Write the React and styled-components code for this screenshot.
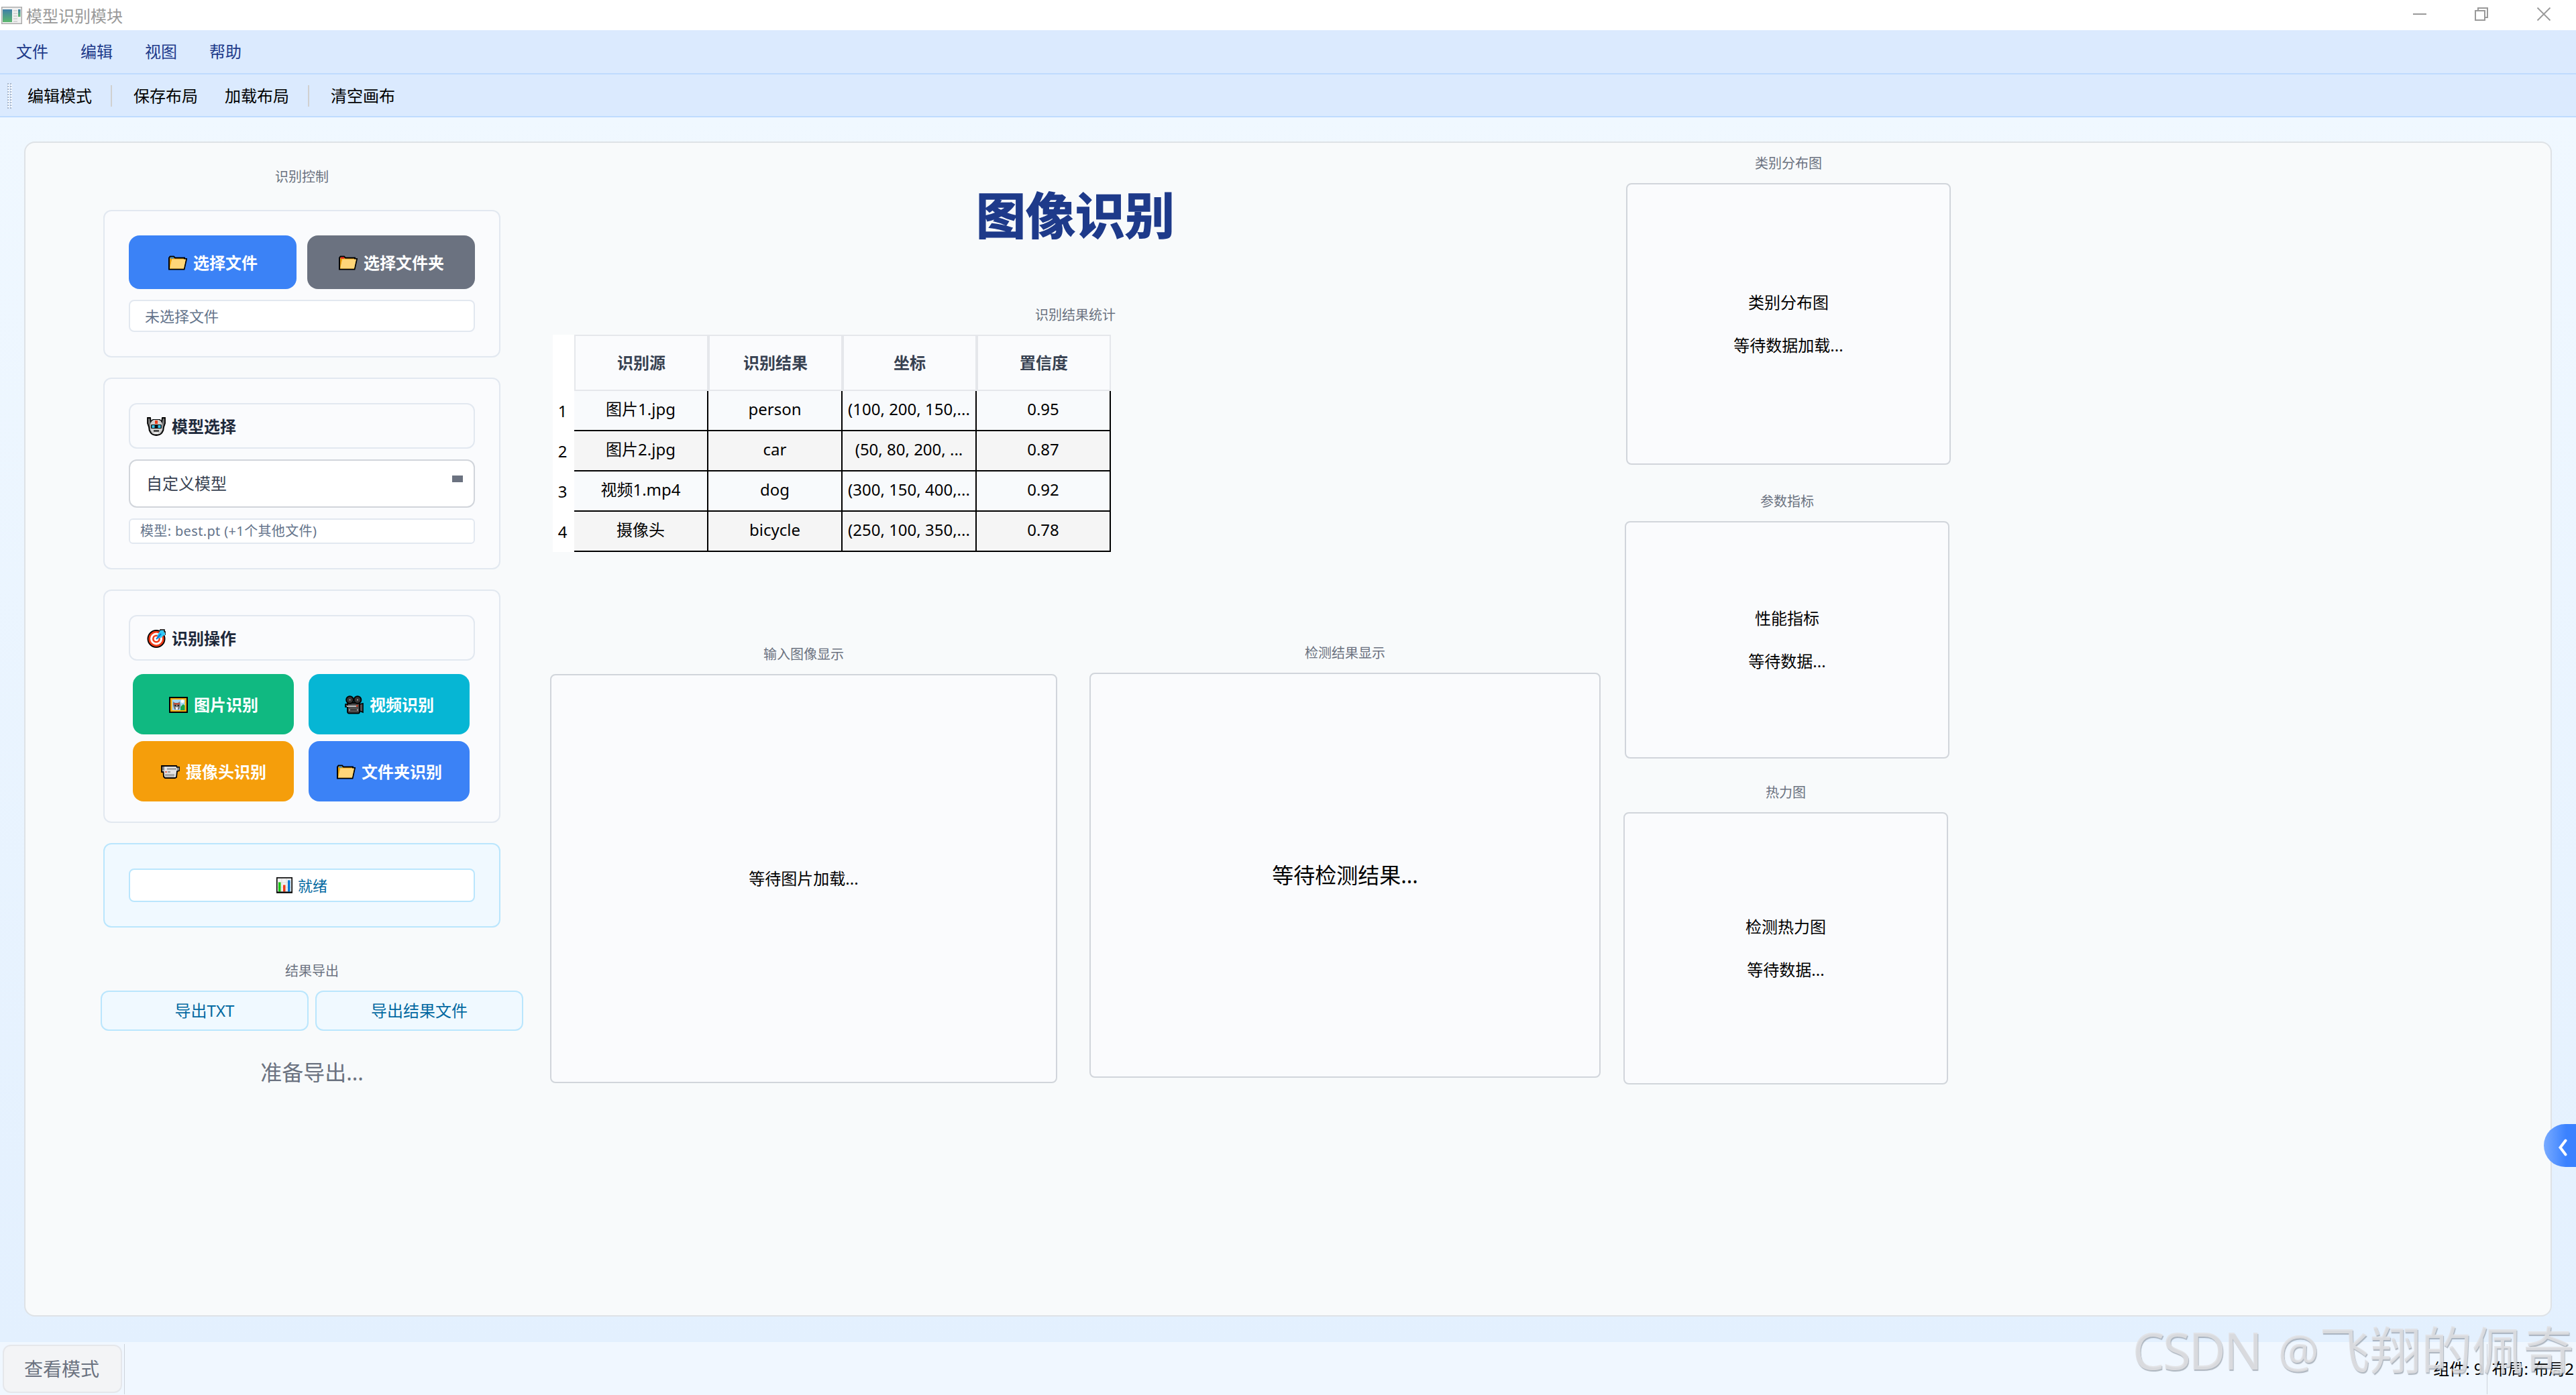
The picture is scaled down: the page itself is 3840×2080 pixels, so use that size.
import React from 'react';
import styled, { createGlobalStyle } from 'styled-components';

const GlobalStyle = createGlobalStyle`
  * {
    box-sizing: border-box;
  }
  body {
    margin: 0;
    font-family: "Noto Sans", "Noto Sans CJK SC", sans-serif;
    font-size: 24px;
    line-height: 30px;
    color: #000;
  }
`;

const Window = styled.div`
  position: relative;
  width: 3840px;
  height: 2080px;
  display: flex;
  flex-direction: column;
  overflow: hidden;
  background: #f0f7ff;
`;

const TitleBar = styled.div`
  height: 45px;
  display: flex;
  align-items: center;
  padding: 0 37px 0 2px;
  background: #fff;
  color: #999;
`;

const TitleText = styled.span`
  flex: 1;
  padding: 2px 0 0 6px;
`;

const WindowButtons = styled.div`
  display: flex;
  gap: 70px;
  padding-bottom: 3px;
`;

const MenuBar = styled.div`
  height: 66px;
  display: flex;
  align-items: center;
  gap: 48px;
  padding-left: 24px;
  background: #dbeafe;
  border-bottom: 2px solid #bfdbfe;
  color: #1e3a8a;
`;

const ToolBar = styled.div`
  height: 64px;
  display: flex;
  align-items: center;
  padding: 2px 0 0 11px;
  background: #dbeafe;
  border-bottom: 2px solid #bfdbfe;
`;

const Grip = styled.div`
  width: 7px;
  height: 38px;
  margin-right: 23px;
  background-image: radial-gradient(circle at 1px 1px, #a9b6c9 1px, transparent 1.3px),
    radial-gradient(circle at 2px 3px, #fff 1px, transparent 1.3px);
  background-size: 4px 4px;
`;

const ToolDivider = styled.div`
  width: 2px;
  height: 32px;
  margin: 0 32px 0 28px;
  background: #d0d0d0;
`;

const ToolItem = styled.span`
  & + & {
    margin-left: 40px;
  }
`;

const Workspace = styled.div`
  height: 1826px;
  padding: 36px 36px 38px;
  background: linear-gradient(#f0f8ff, #e3f0fe);
`;

const Canvas = styled.div`
  height: 100%;
  display: flex;
  align-items: flex-start;
  padding-left: 112px;
  background: #f8fafb;
  border: 2px solid #dee2e6;
  border-radius: 16px;
`;

const LeftColumn = styled.div`
  width: 630px;
  padding-top: 36px;
  margin-right: 40px;
`;

const MiddleColumn = styled.div`
  width: 1566px;
  padding-top: 68px;
  margin-right: 34px;
`;

const RightColumn = styled.div`
  padding-top: 16px;
`;

const Label = styled.div`
  height: 30px;
  margin-bottom: 14px;
  font-size: 20px;
  text-align: center;
  color: #6b7280;
`;

const Controls = styled.div`
  width: 592px;
  margin-left: 4px;
  display: flex;
  flex-direction: column;
  gap: 30px;

  ${Label} {
    margin-bottom: 4px;
  }
`;

const Card = styled.div`
  display: flex;
  flex-direction: column;
  gap: 16px;
  padding: 36px 36px ${p => p.$bottom || 36}px;
  background: ${p => (p.$info ? '#f0f9ff' : '#fafbfd')};
  border: 2px solid ${p => (p.$info ? '#bae6fd' : '#e2e8f0')};
  border-radius: 12px;
`;

const Pair = styled.div`
  display: grid;
  grid-template-columns: 1fr 1fr;
  gap: 16px;
`;

const ActionGrid = styled.div`
  display: grid;
  grid-template-columns: 240px 240px;
  gap: 10px 22px;
  padding: 4px 0 0 6px;
`;

const Button = styled.button`
  height: ${p => p.$height}px;
  display: flex;
  align-items: center;
  justify-content: center;
  gap: 9px;
  padding: 1px 0 0 1px;
  border: none;
  border-radius: 16px;
  background: ${p => p.$color};
  color: #fff;
  font: inherit;
  font-weight: 700;
`;

const FileBox = styled.div`
  height: 48px;
  display: flex;
  align-items: center;
  padding: 0 22px;
  background: #fff;
  border: 2px solid #e2e8f0;
  border-radius: 8px;
  font-size: 22px;
  color: #64748b;
`;

const SectionTitle = styled.div`
  height: 68px;
  display: flex;
  align-items: center;
  gap: 9px;
  padding: 1px 25px 0;
  border: 2px solid #e2e8f0;
  border-radius: 12px;
  font-weight: 700;
  color: #1e293b;
`;

const Select = styled.div`
  height: 72px;
  display: flex;
  justify-content: space-between;
  padding: 19px 16px 0 24px;
  background: #fff;
  border: 2px solid #d1d5db;
  border-radius: 12px;
  color: #374151;
`;

const SelectMark = styled.span`
  width: 16px;
  height: 10px;
  margin-top: 3px;
  background: #6b7280;
`;

const ModelInfo = styled.div`
  height: 38px;
  padding: 2px 15px 0;
  background: #fff;
  border: 2px solid #e2e8f0;
  border-radius: 6px;
  font-size: 20px;
  letter-spacing: 0.35px;
  color: #64748b;
`;

const Ready = styled.div`
  height: 50px;
  display: flex;
  align-items: center;
  justify-content: center;
  gap: 8px;
  background: #fff;
  border: 2px solid #bae6fd;
  border-radius: 8px;
  font-size: 22px;
  color: #0369a1;
`;

const Export = styled.div`
  margin-top: 50px;
`;

const ExportRow = styled.div`
  display: grid;
  grid-template-columns: 310px 310px;
  gap: 10px;
`;

const ExportButton = styled.button`
  height: 60px;
  padding: 0;
  background: #f0f9ff;
  border: 2px solid #bae6fd;
  border-radius: 12px;
  font: inherit;
  color: #0369a1;
`;

const ExportStatus = styled.div`
  margin-top: 42px;
  font-size: 32px;
  line-height: 40px;
  text-align: center;
  color: #6b7280;
`;

const Heading = styled.h1`
  height: 80px;
  margin: 0 0 94px;
  font-size: 74px;
  line-height: 80px;
  text-align: center;
  color: #1e3a8a;
  -webkit-text-stroke: 1.5px #1e3a8a;
`;

const Table = styled.div`
  width: 832px;
  margin-left: 4px;
`;

const TableRow = styled.div`
  display: grid;
  grid-template-columns: 32px repeat(4, 200px);
`;

const IndexCell = styled.div`
  padding: 15px 3px 0 0;
  background: #fff;
  text-align: center;
`;

const HeadCell = styled.div`
  height: 84px;
  display: flex;
  align-items: center;
  justify-content: center;
  background: #fafbfd;
  border: 2px solid #e5e7eb;
  font-weight: 700;
  color: #374151;
`;

const Cell = styled.div`
  height: 60px;
  padding-top: 12px;
  background: ${p => (p.$alt ? '#f5f5f5' : '#f8fafc')};
  border-right: 2px solid #000;
  border-bottom: 2px solid #000;
  text-align: center;
  white-space: nowrap;
`;

const Displays = styled.div`
  display: flex;
  align-items: flex-start;
  gap: 48px;
  margin-top: 136px;
`;

const Widget = styled.div`
  width: ${p => p.$width}px;
  margin-top: ${p => p.$top || 0}px;
  margin-left: ${p => p.$left || 0}px;
`;

const Panel = styled.div`
  height: ${p => p.$height}px;
  display: flex;
  flex-direction: column;
  align-items: center;
  justify-content: center;
  gap: 34px;
  background: #fafbfd;
  border: 2px solid #d1d5db;
  border-radius: 8px;
  font-size: ${p => p.$size || 24}px;
`;

const StatusBar = styled.div`
  height: 79px;
  display: flex;
  align-items: center;
  padding: 1px 3px 0 4px;
`;

const ModeButton = styled.button`
  width: 178px;
  height: 72px;
  padding: 0 2px 0 0;
  background: #f3f4f6;
  border: 2px solid #e5e7eb;
  border-radius: 12px;
  font: inherit;
  font-size: 28px;
  color: #6b7280;
`;

const StatusDivider = styled.div`
  width: 1px;
  height: 75px;
  margin: ${p => p.$margin};
  background: #cdd3da;
`;

const Spacer = styled.div`
  flex: 1;
`;

const Drawer = styled.div`
  position: absolute;
  top: 1676px;
  right: 0;
  width: 48px;
  height: 64px;
  padding: 22px 0 0 21px;
  line-height: 0;
  border-radius: 32px 0 0 32px;
  background: linear-gradient(90deg, #78aaff, #3b82ff 70%);
`;

const Watermark = styled.div`
  position: absolute;
  right: 3px;
  bottom: 17px;
  display: flex;
  font-size: 76px;
  line-height: 100px;
  white-space: nowrap;
  color: rgba(224, 225, 227, 0.85);
  text-shadow: 1px 2px 1px rgba(130, 138, 148, 0.6);
`;

const Brand = styled.span`
  margin-right: 26px;
  letter-spacing: -3px;
`;

const At = styled.span`
  font-size: 68px;
`;

const AppIcon = () => (
  <svg width="31" height="26" viewBox="0 0 31 26">
    <defs>
      <linearGradient id="screen" x1="0" y1="0" x2="0" y2="1">
        <stop offset="0" stopColor="#3f7fa8" />
        <stop offset="1" stopColor="#5db86d" />
      </linearGradient>
    </defs>
    <rect x="0.7" y="0.7" width="29.6" height="24.6" fill="#f1f1f1" stroke="#a8a8a8" strokeWidth="1.4" />
    <rect x="2" y="4" width="14" height="19" fill="url(#screen)" />
    <path d="M18 6h6M18 10h6M18 14h6M18 18h6M18 22h6" stroke="#ccc" strokeWidth="1.5" />
    <rect x="25" y="4" width="3.5" height="11" fill="url(#screen)" />
  </svg>
);

const Folder = ({ tab = '#2f8fe0' }) => (
  <svg width="28" height="22" viewBox="0 0 28 22">
    <path d="M1 20.5V3.5L2.5 1.5H8L10 3.5H24V5H27L23.5 20.5Z" fill="#eba10c" stroke="#000" strokeWidth="2" />
    <path d="M3 2.5h5v2H3z" fill={tab} />
    <path d="M5 5.5H26L23 19.5H2Z" fill="#ffd679" />
    <path d="M2 5.5H5L2 18Z" fill="#eba10c" />
  </svg>
);

const Robot = () => (
  <svg width="28" height="28" viewBox="0 0 28 28">
    <path d="M1 1h4l1 6 3-3h10l3 3 1-6h4v8l-2 6c0 6-3 12-11 12S3 21 3 15L1 9Z" fill="#777" stroke="#000" strokeWidth="1.8" />
    <path d="M7 6l3-2h8l3 2 2 5v8l-4 6H9l-4-6v-8Z" fill="#cfcfcf" />
    <path d="M12 5h4v5h-4z" fill="#f03a17" />
    <rect x="6" y="11" width="16" height="6" rx="1" fill="#111" />
    <rect x="7.5" y="12" width="4" height="4" fill="#31c8f5" />
    <rect x="16.5" y="12" width="4" height="4" fill="#31c8f5" />
    <path d="M10 20.5h8" stroke="#111" strokeWidth="2" />
    <path d="M11 24h6" stroke="#fff" strokeWidth="1.5" />
  </svg>
);

const Target = () => (
  <svg width="28" height="28" viewBox="0 0 28 28">
    <circle cx="14" cy="14.5" r="12.6" fill="#f03a17" stroke="#000" strokeWidth="1.8" />
    <circle cx="14" cy="14.5" r="9" fill="#fff" />
    <circle cx="14" cy="14.5" r="6" fill="#f03a17" />
    <circle cx="14" cy="14.5" r="3.4" fill="#fff" />
    <path d="M15.5 9L20 2h5l-.5 2.5H27V8l-6 5-5 1Z" fill="#31c8f5" />
    <path d="M20 2V1h6v3h2v5" fill="none" stroke="#000" strokeWidth="1.6" />
    <path d="M14 15l7-8" stroke="#0078d7" strokeWidth="2" />
  </svg>
);

const Picture = () => (
  <svg width="28" height="24" viewBox="0 0 28 24">
    <rect x="1" y="1" width="26" height="22" fill="#f5ae0a" stroke="#000" strokeWidth="2" />
    <rect x="4.5" y="4" width="19" height="16" fill="#a5d8f5" />
    <circle cx="20" cy="6.5" r="2.5" fill="#fff" />
    <path d="M17 20v-5l4-4 2.5 2v7Z" fill="#16a34a" />
    <path d="M6 7l3 2h4l3-2 1 6-2 6H8l-2-6Z" fill="#777" />
    <path d="M7 10.5h9" stroke="#e0391b" strokeWidth="1.5" />
    <path d="M8.5 13h1.5M13 13h1.5" stroke="#000" strokeWidth="2" />
    <path d="M9.5 15.5h4l-1 3.5h-2Z" fill="#fff" />
  </svg>
);

const MovieCamera = () => (
  <svg width="28" height="28" viewBox="0 0 28 28">
    <path d="M1 13h3v4H1zM22 13l5-1v13l-5-2z" fill="#555" stroke="#000" strokeWidth="1.6" />
    <rect x="4" y="11" width="18" height="15.5" rx="2" fill="#4b4b4b" stroke="#000" strokeWidth="1.8" />
    <circle cx="7.5" cy="6.5" r="5.4" fill="#333" stroke="#000" strokeWidth="1.8" />
    <circle cx="19" cy="6.5" r="5.4" fill="#333" stroke="#000" strokeWidth="1.8" />
    <path d="M6.5 6.5h2M18 6.5h2" stroke="#999" strokeWidth="2" />
    <path d="M3 16h14" stroke="#bbb" strokeWidth="2" />
    <path d="M17 15.5h2.5" stroke="#f03a17" strokeWidth="2" />
    <path d="M6 20h14v3H6z" fill="#888" />
    <path d="M8 21.5h10" stroke="#111" strokeWidth="1.6" />
  </svg>
);

const Camcorder = () => (
  <svg width="28" height="20" viewBox="0 0 28 20">
    <path d="M1 1h22l1 2h3v5l-3 1-1 9-2 1H6l-2-2-.5-7H1Z" fill="#e3e3e3" stroke="#000" strokeWidth="1.8" />
    <path d="M2 2h3v6H2zM24 3.5h3v4h-3z" fill="#888" />
    <path d="M9 4h14v3H9zM6 13h14v4H6z" fill="#aaa" />
    <path d="M6 10h3" stroke="#f03a17" strokeWidth="1.4" />
    <path d="M10 10h4" stroke="#777" strokeWidth="1.4" />
  </svg>
);

const Chart = () => (
  <svg width="24" height="24" viewBox="0 0 24 24">
    <rect x="0.8" y="0.8" width="22.4" height="22" fill="#f2f2f2" stroke="#000" strokeWidth="1.6" />
    <path d="M2 8h20M2 15h20M8 2v20M15 2v20" stroke="#ddd" />
    <rect x="3" y="7.5" width="3.5" height="14" fill="#16c60c" />
    <rect x="10" y="11.5" width="3.5" height="10" fill="#f03a17" />
    <rect x="17" y="4.5" width="3.5" height="17" fill="#0078d7" />
    <path d="M0 22.5h24" stroke="#000" strokeWidth="2" />
  </svg>
);

const rows = [
  ['图片1.jpg', 'person', '(100, 200, 150,...', '0.95'],
  ['图片2.jpg', 'car', '(50, 80, 200, ...', '0.87'],
  ['视频1.mp4', 'dog', '(300, 150, 400,...', '0.92'],
  ['摄像头', 'bicycle', '(250, 100, 350,...', '0.78'],
];

const charts = [
  { label: '类别分布图', lines: ['类别分布图', '等待数据加载...'], height: 420, left: 4 },
  { label: '参数指标', lines: ['性能指标', '等待数据...'], height: 354, left: 2, top: 40 },
  { label: '热力图', lines: ['检测热力图', '等待数据...'], height: 406, left: 0, top: 36 },
];

function Header() {
  return (
    <>
      <TitleBar>
        <AppIcon />
        <TitleText>模型识别模块</TitleText>
        <WindowButtons>
          <svg width="22" height="22" viewBox="0 0 22 22"><path d="M0 11h20" stroke="#999" strokeWidth="2" /></svg>
          <svg width="22" height="22" viewBox="0 0 22 22" fill="none" stroke="#999" strokeWidth="2">
            <path d="M1 6h14v14H1zM5 6V2h14v14h-4" />
          </svg>
          <svg width="22" height="22" viewBox="0 0 22 22"><path d="M1.5 1.5l19 19M20.5 1.5l-19 19" stroke="#999" strokeWidth="1.8" /></svg>
        </WindowButtons>
      </TitleBar>
      <MenuBar>
        <span>文件</span>
        <span>编辑</span>
        <span>视图</span>
        <span>帮助</span>
      </MenuBar>
      <ToolBar>
        <Grip />
        <ToolItem>编辑模式</ToolItem>
        <ToolDivider />
        <ToolItem>保存布局</ToolItem>
        <ToolItem>加载布局</ToolItem>
        <ToolDivider />
        <ToolItem>清空画布</ToolItem>
      </ToolBar>
    </>
  );
}

function ControlPanel() {
  return (
    <Controls>
      <Label>识别控制</Label>
      <Card>
        <Pair>
          <Button $height={80} $color="#3b82f6"><Folder />选择文件</Button>
          <Button $height={80} $color="#6b7280"><Folder tab="#e81224" />选择文件夹</Button>
        </Pair>
        <FileBox>未选择文件</FileBox>
      </Card>
      <Card>
        <SectionTitle><Robot />模型选择</SectionTitle>
        <Select>自定义模型<SelectMark /></Select>
        <ModelInfo>模型: best.pt (+1个其他文件)</ModelInfo>
      </Card>
      <Card $bottom={30}>
        <SectionTitle><Target />识别操作</SectionTitle>
        <ActionGrid>
          <Button $height={90} $color="#10b981"><Picture />图片识别</Button>
          <Button $height={90} $color="#06b6d4"><MovieCamera />视频识别</Button>
          <Button $height={90} $color="#f59e0b"><Camcorder />摄像头识别</Button>
          <Button $height={90} $color="#3b82f6"><Folder />文件夹识别</Button>
        </ActionGrid>
      </Card>
      <Card $info>
        <Ready><Chart />就绪</Ready>
      </Card>
    </Controls>
  );
}

function ResultTable() {
  return (
    <Table>
      <TableRow>
        <IndexCell />
        {['识别源', '识别结果', '坐标', '置信度'].map(name => <HeadCell key={name}>{name}</HeadCell>)}
      </TableRow>
      {rows.map((row, i) => (
        <TableRow key={i}>
          <IndexCell>{i + 1}</IndexCell>
          {row.map(value => <Cell key={value} $alt={i % 2 === 1}>{value}</Cell>)}
        </TableRow>
      ))}
    </Table>
  );
}

function App() {
  return (
    <>
      <GlobalStyle />
      <Window>
        <Header />
        <Workspace>
          <Canvas>
            <LeftColumn>
              <ControlPanel />
              <Export>
                <Label>结果导出</Label>
                <ExportRow>
                  <ExportButton>导出TXT</ExportButton>
                  <ExportButton>导出结果文件</ExportButton>
                </ExportRow>
                <ExportStatus>准备导出...</ExportStatus>
              </Export>
            </LeftColumn>
            <MiddleColumn>
              <Heading>图像识别</Heading>
              <Label>识别结果统计</Label>
              <ResultTable />
              <Displays>
                <Widget $width={756} $top={2}>
                  <Label>输入图像显示</Label>
                  <Panel $height={610}>等待图片加载...</Panel>
                </Widget>
                <Widget $width={762}>
                  <Label>检测结果显示</Label>
                  <Panel $height={604} $size={32}>等待检测结果...</Panel>
                </Widget>
              </Displays>
            </MiddleColumn>
            <RightColumn>
              {charts.map(c => (
                <Widget key={c.label} $width={484} $left={c.left} $top={c.top}>
                  <Label>{c.label}</Label>
                  <Panel $height={c.height}>
                    {c.lines.map(line => <span key={line}>{line}</span>)}
                  </Panel>
                </Widget>
              ))}
            </RightColumn>
          </Canvas>
        </Workspace>
        <StatusBar>
          <ModeButton>查看模式</ModeButton>
          <StatusDivider $margin="0 0 0 3px" />
          <Spacer />
          <span>组件: 9</span>
          <StatusDivider $margin="0 7px 0 5px" />
          <span>布局: 布局2</span>
        </StatusBar>
        <Drawer>
          <svg width="14" height="26" viewBox="0 0 14 26">
            <path d="M11.5 2.5L3.5 13l8 10.5" fill="none" stroke="#fff" strokeWidth="4" strokeLinecap="round" />
          </svg>
        </Drawer>
        <Watermark>
          <Brand>CSDN</Brand>
          <At>@</At>
          <span>飞翔的佩奇</span>
        </Watermark>
      </Window>
    </>
  );
}

export default App;
